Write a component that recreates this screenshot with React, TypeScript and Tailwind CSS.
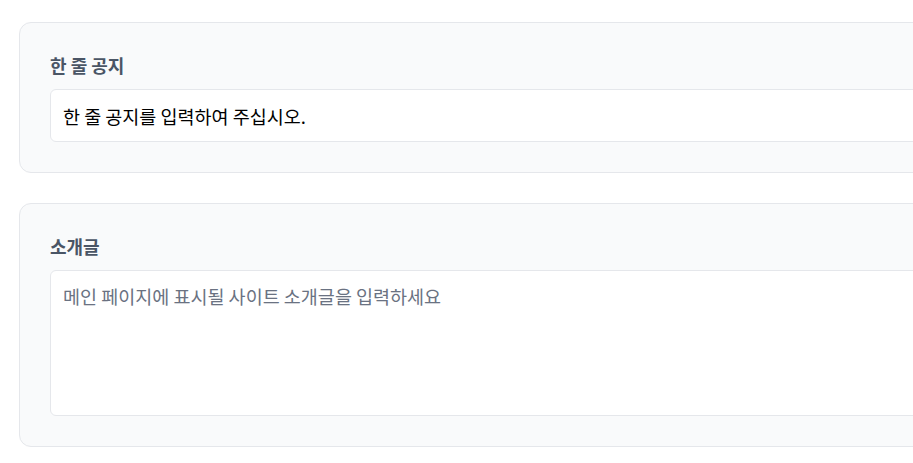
import React from "react";

export default function App() {
  return (
    <div
      className="w-full min-h-screen overflow-hidden bg-white"
      style={{ fontFamily: '"Noto Sans CJK KR", "Noto Sans", sans-serif' }}
    >
      <div className="flex flex-col gap-[30px] pl-[19px] pt-[22px] mr-[-60px]">
        <section className="rounded-xl border border-gray-200 bg-gray-50 p-[30px]">
          <label className="block text-[18px] leading-6 font-semibold text-gray-600 mb-3">
            한 줄 공지
          </label>
          <input
            type="text"
            defaultValue="한 줄 공지를 입력하여 주십시오."
            className="block w-full h-[53px] rounded-md border border-gray-200 bg-white px-3 text-[18.5px] text-black outline-none"
          />
        </section>

        <section className="rounded-xl border border-gray-200 bg-gray-50 p-[30px]">
          <label className="block text-[18px] leading-6 font-semibold text-gray-600 mb-3">
            소개글
          </label>
          <textarea
            placeholder="메인 페이지에 표시될 사이트 소개글을 입력하세요"
            className="block w-full h-[146px] resize-none rounded-md border border-gray-200 bg-white px-3 py-[11px] text-[18.5px] leading-7 text-black placeholder:text-gray-500 outline-none"
          />
        </section>
      </div>
    </div>
  );
}
